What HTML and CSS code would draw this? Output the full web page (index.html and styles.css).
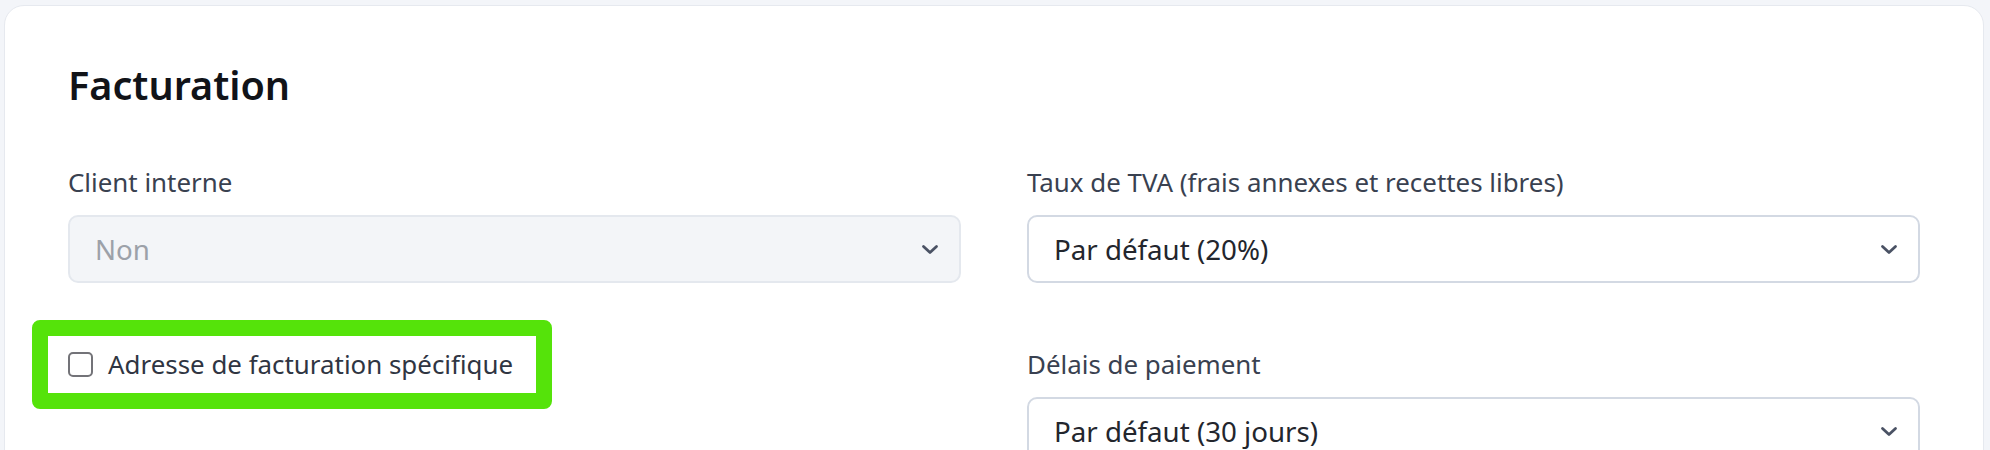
FILE: index.html
```html
<!DOCTYPE html>
<html lang="fr">
<head>
  <meta charset="UTF-8">
  <title>Facturation</title>
  <link rel="stylesheet" href="styles.css">
</head>
<body>
  <div class="card">
    <h2 class="card-title">Facturation</h2>

    <div class="form-grid">
      <div class="field">
        <label class="field-label">Client interne</label>
        <div class="select disabled">
          <span>Non</span>
          <svg class="chevron" width="18" height="11" viewBox="0 0 18 11"><path d="M2.5 2.5L9 8.5L15.5 2.5"/></svg>
        </div>
      </div>

      <div class="field">
        <label class="field-label">Taux de TVA (frais annexes et recettes libres)</label>
        <div class="select">
          <span>Par défaut (20%)</span>
          <svg class="chevron" width="18" height="11" viewBox="0 0 18 11"><path d="M2.5 2.5L9 8.5L15.5 2.5"/></svg>
        </div>
      </div>

      <div class="field">
        <label class="check-row highlighted">
          <input type="checkbox" class="checkbox">
          <span>Adresse de facturation spécifique</span>
        </label>
      </div>

      <div class="field">
        <label class="field-label">Délais de paiement</label>
        <div class="select">
          <span>Par défaut (30 jours)</span>
          <svg class="chevron" width="18" height="11" viewBox="0 0 18 11"><path d="M2.5 2.5L9 8.5L15.5 2.5"/></svg>
        </div>
      </div>
    </div>
  </div>
</body>
</html>
```

FILE: styles.css
```css
body {
  font-family: "Noto Sans", "Open Sans", sans-serif;
  margin: 0;
  background: #f3f5f9;
  overflow: hidden;
}

.card {
  margin: 5px 6px 0 4px;
  background: white;
  border: 1px solid #e6e9ef;
  border-radius: 20px;
  padding: 55px 63px 80px;
}

.card-title {
  font-size: 39.6px;
  line-height: 48px;
  font-weight: 600;
  color: #111318;
  margin: 0 0 55px;
}

.form-grid {
  display: grid;
  grid-template-columns: 1fr 1fr;
  column-gap: 66px;
  row-gap: 63px;
}

.field-label {
  display: block;
  font-size: 25.9px;
  line-height: 36px;
  color: #394150;
  margin-bottom: 15px;
}

.select {
  display: flex;
  align-items: center;
  justify-content: space-between;
  height: 68px;
  box-sizing: border-box;
  padding: 0 20px 0 25px;
  border: 2px solid #d3d9e3;
  border-radius: 10px;
  background: white;
  font-size: 27.7px;
  color: #23262d;
}

.select.disabled {
  background: #f3f5f8;
  border-color: #e4e8ee;
  color: #9ca1a9;
}

.chevron path {
  fill: none;
  stroke: #4a5264;
  stroke-width: 2.8;
  stroke-linecap: round;
  stroke-linejoin: round;
}

.check-row {
  display: inline-flex;
  align-items: center;
  gap: 15px;
  font-size: 25.9px;
  line-height: 36px;
  color: #2f3542;
}

.checkbox {
  appearance: none;
  margin: 0;
  width: 25px;
  height: 25px;
  border: 2px solid #737378;
  border-radius: 5px;
  background: white;
}

/* annotation frame drawn over the row */
.highlighted {
  position: relative;
}

.highlighted::after {
  content: "";
  position: absolute;
  top: -26px;
  right: -39px;
  bottom: -27px;
  left: -36px;
  border: 16px solid #55e30a;
  border-radius: 8px;
}
```
